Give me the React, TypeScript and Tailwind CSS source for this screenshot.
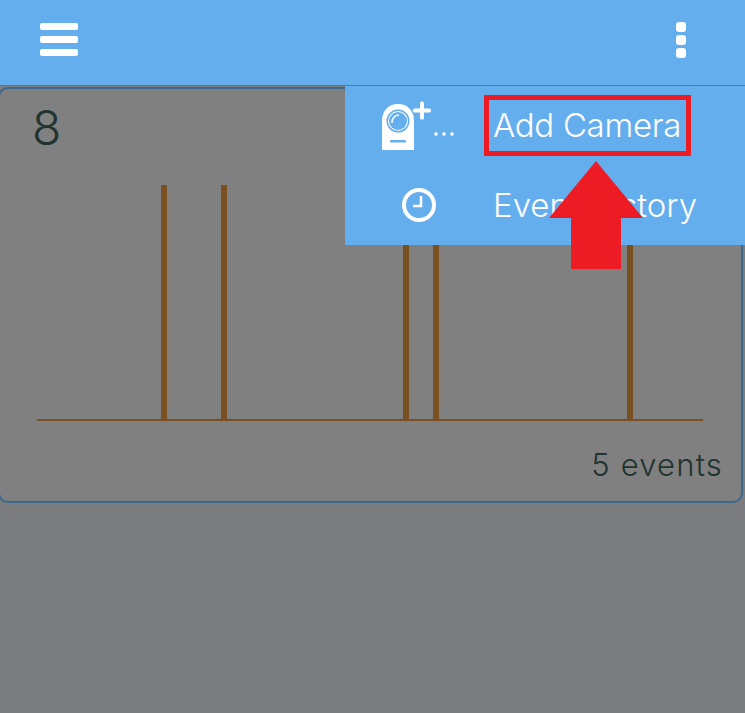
export default function App() {
  const bars = [164, 224, 406, 436, 630];

  return (
    <div className="relative h-[713px] w-[745px] overflow-hidden bg-[#7b7c7d] font-['Inter',sans-serif]">
      {/* Top bar */}
      <header className="flex h-[86px] items-center justify-between border-b border-[#4a7bab] bg-[#64aeee] pl-10 pr-[59px] pb-[6px]">
        <div className="flex w-[38px] flex-col gap-[6px]">
          <span className="h-[7px] rounded-[2px] bg-white" />
          <span className="h-[7px] rounded-[2px] bg-white" />
          <span className="h-[7px] rounded-[2px] bg-white" />
        </div>
        <div className="flex w-[10px] flex-col gap-[3px]">
          <span className="h-[10px] rounded-[3px] bg-white" />
          <span className="h-[10px] rounded-[3px] bg-white" />
          <span className="h-[10px] rounded-[3px] bg-white" />
        </div>
      </header>

      {/* Card */}
      <div className="ml-[-2px] mt-[1px] h-[416px] w-[745px] rounded-[10px] border-2 border-[#3d6890] bg-[#808080] text-[#20332e]">
        <div className="pl-[32px] pt-[9px] text-[48px] leading-[60px] font-light">8</div>
        <svg width="741" height="262" viewBox="0 0 741 262" className="mt-[27px] block">
          {bars.map((x) => (
            <rect key={x} x={x - 3} y={0} width={6} height={236} fill="#7a5022" />
          ))}
          <rect x={37} y={234} width={666} height={2} fill="#7a5022" />
        </svg>
        <div className="mt-[-2px] pr-[18px] text-right text-[31px] leading-[40px] font-light tracking-[1.2px]">5 events</div>
      </div>

      {/* Dropdown menu */}
      <div className="absolute left-[345px] top-[86px] h-[159px] w-[400px] bg-[#64aeee] text-white">
        <div className="flex h-[79px] items-center">
          <div className="w-[149px] pl-[37px] pt-[2px]">
            <svg width="76" height="52" viewBox="0 0 76 52" className="block">
              <path d="M0 49V20C0 9 7 3 16 3s16 6 16 17v29z" fill="#fff" />
              <circle cx="16" cy="20" r="11.500" fill="#64aeee" />
              <circle cx="16" cy="20" r="10" fill="#fff" />
              <circle cx="16" cy="20" r="9" fill="#64aeee" />
              <path d="M10 22a7 7 0 0 1 7-8" fill="none" stroke="#fff" strokeWidth="1.500" />
              <rect x="8" y="39" width="16" height="2.500" rx="1.200" fill="#64aeee" />
              <rect x="31" y="7.500" width="18" height="4" rx="1.500" fill="#fff" />
              <rect x="38" y="0.500" width="4" height="18" rx="1.500" fill="#fff" />
              <circle cx="54" cy="33" r="1.800" fill="#fff" />
              <circle cx="62" cy="33" r="1.800" fill="#fff" />
              <circle cx="70" cy="33" r="1.800" fill="#fff" />
            </svg>
          </div>
          <span className="ml-[-1px] text-[33px] leading-none font-[350] tracking-[-0.3px]">Add Camera</span>
        </div>
        <div className="flex h-[80px] items-center">
          <div className="w-[149px] pl-[56px]">
            <svg width="36" height="36" viewBox="0 0 36 36" className="block">
              <circle cx="18" cy="18" r="15" fill="none" stroke="#fff" strokeWidth="4" />
              <path d="M20 9v10h-8" fill="none" stroke="#fff" strokeWidth="2.500" />
            </svg>
          </div>
          <span className="ml-[-1px] text-[33px] leading-none font-[350]">Event History</span>
        </div>
      </div>

      {/* Red callout */}
      <div className="absolute left-[484px] top-[95px] h-[61px] w-[207px] border-[5px] border-[#ed1c24]" />
      <svg width="96" height="109" viewBox="0 0 96 109" className="absolute left-[549px] top-[161px]">
        <path d="M47 0L94 57H72V108H22V57H0z" fill="#ed1c24" />
      </svg>
    </div>
  );
}
